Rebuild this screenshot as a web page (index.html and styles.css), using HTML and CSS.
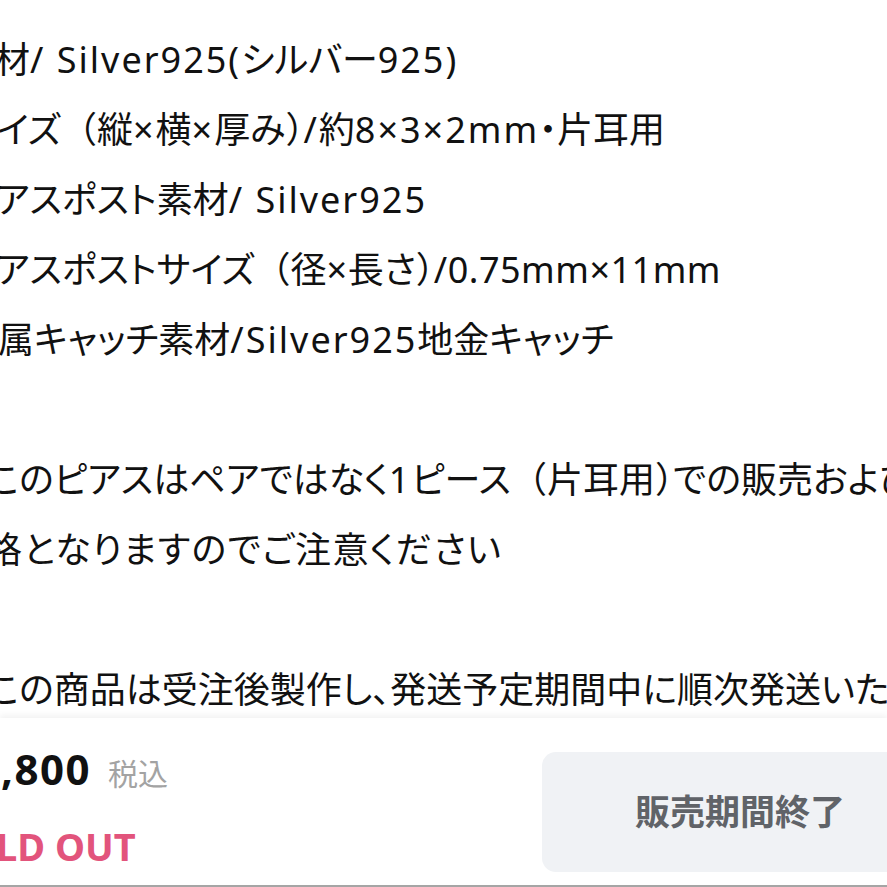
FILE: index.html
```html
<!DOCTYPE html>
<html lang="ja">
<head>
<meta charset="utf-8">
<title>商品説明</title>
<link rel="stylesheet" href="styles.css">
</head>
<body>
<div class="page">
  <div class="desc">
    <p class="line cut-1">材<span class="en">/ Silver925(</span>シルバー<span class="en">925)</span></p>
    <p class="line cut-2">イズ<span class="fw">（</span>縦<span class="en">×</span>横<span class="en">×</span>厚み<span class="hw">）</span><span class="en">/</span>約<span class="en">8×3×2mm</span>・片耳用</p>
    <p class="line cut-3">アスポスト素材<span class="en">/ Silver925</span></p>
    <p class="line cut-3">アスポストサイズ<span class="fw">（</span>径<span class="en tight">×</span>長さ<span class="hw">）</span><span class="en tight">/0.75mm×11mm</span></p>
    <p class="line cut-5">属キャッチ素材<span class="en">/Silver925</span>地金キャッチ</p>
    <p class="line"></p>
    <p class="line cut-6">このピアスはペアではなく<span class="en">1</span>ピース<span class="fw">（</span>片耳用<span class="hw">）</span>での販売および</p>
    <p class="line cut-7 wide">格となりますのでご注意ください</p>
    <p class="line"></p>
    <p class="line cut-6">この商品は受注後製作し、発送予定期間中に順次発送いたします</p>
  </div>
  <div class="bar">
    <div class="price-col">
      <div class="price"><span class="amount">¥1,800</span><span class="tax">税込</span></div>
      <div class="soldout">SOLD OUT</div>
    </div>
    <div class="button">販売期間終了</div>
  </div>
  <div class="home-line"></div>
</div>
</body>
</html>
```

FILE: styles.css
```css
html, body {
  margin: 0;
  padding: 0;
  background: #ffffff;
}

.page {
  width: 887px;
  height: 887px;
  overflow: hidden;
  display: flex;
  flex-direction: column;
  font-family: "Noto Sans CJK JP", "Noto Sans", sans-serif;
}

.desc {
  height: 718px;
  flex: none;
  overflow: hidden;
  padding-top: 22px;
  box-sizing: border-box;
  color: #111111;
  font-size: 36px;
  font-feature-settings: "palt";
}

.line {
  margin: 0;
  height: 70px;
  line-height: 70px;
  white-space: nowrap;
}

.en {
  font-family: "Noto Sans", sans-serif;
  letter-spacing: 2px;
  font-feature-settings: normal;
}

.en.tight { letter-spacing: 0.5px; }

.wide { letter-spacing: 1.3px; }

.fw { font-feature-settings: normal; }
.hw { font-feature-settings: "halt"; }

.cut-1 { text-indent: -6px; }
.cut-2 { text-indent: -3px; }
.cut-3 { text-indent: -4px; }
.cut-5 { text-indent: -2px; }
.cut-6 { text-indent: -12px; }
.cut-7 { text-indent: -14px; }

.bar {
  flex: 1;
  background: #ffffff;
  box-shadow: 0 -3px 6px rgba(0, 0, 0, 0.05);
  display: flex;
  justify-content: space-between;
  align-items: flex-start;
}

.price-col {
  padding-top: 29px;
  display: flex;
  flex-direction: column;
}

.price {
  display: flex;
  align-items: baseline;
  height: 44px;
  line-height: 44px;
}

.amount {
  margin-left: -50px;
  font-family: "Noto Sans", sans-serif;
  font-weight: 700;
  font-size: 42px;
  letter-spacing: 1.5px;
  color: #111111;
}

.tax {
  margin-left: 17px;
  font-size: 30px;
  color: #a3a3a3;
}

.soldout {
  margin-top: 35px;
  margin-left: -55px;
  font-family: "Noto Sans", sans-serif;
  font-weight: 700;
  font-size: 38px;
  line-height: 40px;
  color: #e2547c;
}

.button {
  margin-top: 34px;
  margin-right: -51px;
  width: 396px;
  height: 120px;
  box-sizing: border-box;
  padding-bottom: 6px;
  border-radius: 14px;
  background: #f0f2f5;
  color: #606368;
  font-size: 35px;
  font-weight: 700;
  display: flex;
  align-items: center;
  justify-content: center;
}

.home-line {
  height: 2px;
  background: #a5a5a5;
  flex: none;
}
```
